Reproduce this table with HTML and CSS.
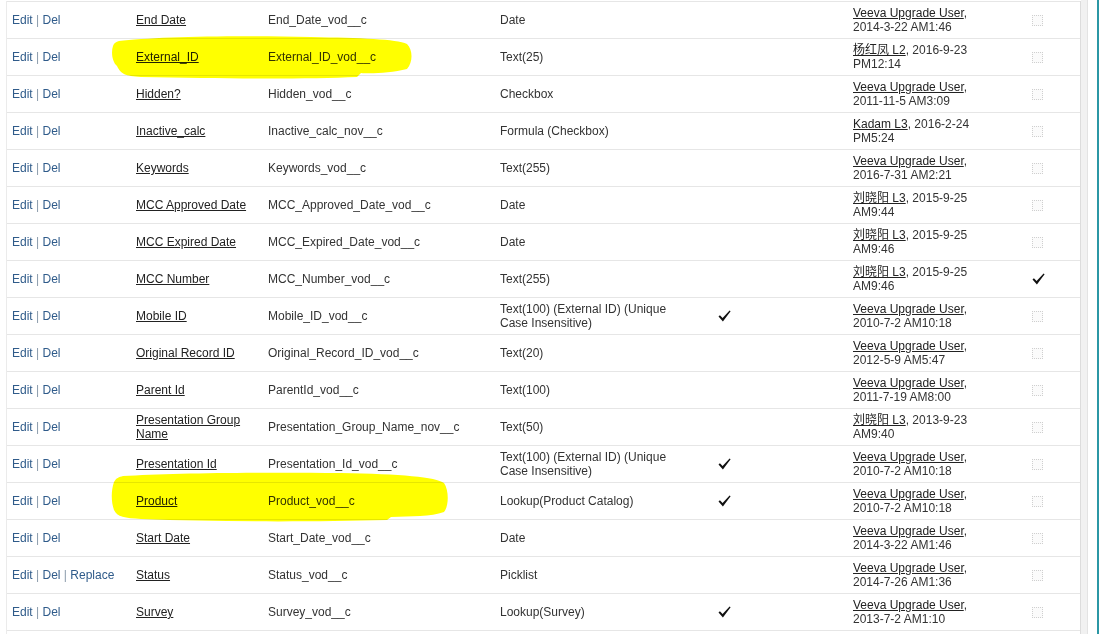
FILE: index.html
```html
<!DOCTYPE html>
<html>
<head>
<meta charset="utf-8">
<link rel="stylesheet" href="styles.css">
</head>
<body>
<div class="main">
  <div class="table">
    <div class="row"><div class="act"><a>Edit</a> <span class="sep">|</span> <a>Del</a></div><div class="lbl"><a>End Date</a></div><div class="api">End_Date_vod__c</div><div class="type">Date</div><div class="idx"></div><div class="mod"><span class="mt"><a>Veeva Upgrade User</a>, 2014-3-22 AM1:46</span></div><div class="ck"><span class="box"></span></div></div>
    <div class="row"><div class="act"><a>Edit</a> <span class="sep">|</span> <a>Del</a></div><div class="lbl"><a>External_ID</a></div><div class="api">External_ID_vod__c</div><div class="type">Text(25)</div><div class="idx"></div><div class="mod"><span class="mt"><a>杨红凤 L2</a>, 2016-9-23 PM12:14</span></div><div class="ck"><span class="box"></span></div></div>
    <div class="row"><div class="act"><a>Edit</a> <span class="sep">|</span> <a>Del</a></div><div class="lbl"><a>Hidden?</a></div><div class="api">Hidden_vod__c</div><div class="type">Checkbox</div><div class="idx"></div><div class="mod"><span class="mt"><a>Veeva Upgrade User</a>, 2011-11-5 AM3:09</span></div><div class="ck"><span class="box"></span></div></div>
    <div class="row"><div class="act"><a>Edit</a> <span class="sep">|</span> <a>Del</a></div><div class="lbl"><a>Inactive_calc</a></div><div class="api">Inactive_calc_nov__c</div><div class="type">Formula (Checkbox)</div><div class="idx"></div><div class="mod"><span class="mt"><a>Kadam L3</a>, 2016-2-24 PM5:24</span></div><div class="ck"><span class="box"></span></div></div>
    <div class="row"><div class="act"><a>Edit</a> <span class="sep">|</span> <a>Del</a></div><div class="lbl"><a>Keywords</a></div><div class="api">Keywords_vod__c</div><div class="type">Text(255)</div><div class="idx"></div><div class="mod"><span class="mt"><a>Veeva Upgrade User</a>, 2016-7-31 AM2:21</span></div><div class="ck"><span class="box"></span></div></div>
    <div class="row"><div class="act"><a>Edit</a> <span class="sep">|</span> <a>Del</a></div><div class="lbl"><a>MCC Approved Date</a></div><div class="api">MCC_Approved_Date_vod__c</div><div class="type">Date</div><div class="idx"></div><div class="mod"><span class="mt"><a>刘晓阳 L3</a>, 2015-9-25 AM9:44</span></div><div class="ck"><span class="box"></span></div></div>
    <div class="row"><div class="act"><a>Edit</a> <span class="sep">|</span> <a>Del</a></div><div class="lbl"><a>MCC Expired Date</a></div><div class="api">MCC_Expired_Date_vod__c</div><div class="type">Date</div><div class="idx"></div><div class="mod"><span class="mt"><a>刘晓阳 L3</a>, 2015-9-25 AM9:46</span></div><div class="ck"><span class="box"></span></div></div>
    <div class="row"><div class="act"><a>Edit</a> <span class="sep">|</span> <a>Del</a></div><div class="lbl"><a>MCC Number</a></div><div class="api">MCC_Number_vod__c</div><div class="type">Text(255)</div><div class="idx"></div><div class="mod"><span class="mt"><a>刘晓阳 L3</a>, 2015-9-25 AM9:46</span></div><div class="ck"><svg class="tick" viewBox="0 0 13 12" width="13" height="12"><path d="M0.5 6.6 L1.9 5.3 L4.6 8.1 L11.6 0.4 L12.6 1.3 L4.9 11.6 Z"/></svg></div></div>
    <div class="row"><div class="act"><a>Edit</a> <span class="sep">|</span> <a>Del</a></div><div class="lbl"><a>Mobile ID</a></div><div class="api">Mobile_ID_vod__c</div><div class="type">Text(100) (External ID) (Unique Case Insensitive)</div><div class="idx"><svg class="tick" viewBox="0 0 13 12" width="13" height="12"><path d="M0.5 6.6 L1.9 5.3 L4.6 8.1 L11.6 0.4 L12.6 1.3 L4.9 11.6 Z"/></svg></div><div class="mod"><span class="mt"><a>Veeva Upgrade User</a>, 2010-7-2 AM10:18</span></div><div class="ck"><span class="box"></span></div></div>
    <div class="row"><div class="act"><a>Edit</a> <span class="sep">|</span> <a>Del</a></div><div class="lbl"><a>Original Record ID</a></div><div class="api">Original_Record_ID_vod__c</div><div class="type">Text(20)</div><div class="idx"></div><div class="mod"><span class="mt"><a>Veeva Upgrade User</a>, 2012-5-9 AM5:47</span></div><div class="ck"><span class="box"></span></div></div>
    <div class="row"><div class="act"><a>Edit</a> <span class="sep">|</span> <a>Del</a></div><div class="lbl"><a>Parent Id</a></div><div class="api">ParentId_vod__c</div><div class="type">Text(100)</div><div class="idx"></div><div class="mod"><span class="mt"><a>Veeva Upgrade User</a>, 2011-7-19 AM8:00</span></div><div class="ck"><span class="box"></span></div></div>
    <div class="row"><div class="act"><a>Edit</a> <span class="sep">|</span> <a>Del</a></div><div class="lbl"><a>Presentation Group Name</a></div><div class="api">Presentation_Group_Name_nov__c</div><div class="type">Text(50)</div><div class="idx"></div><div class="mod"><span class="mt"><a>刘晓阳 L3</a>, 2013-9-23 AM9:40</span></div><div class="ck"><span class="box"></span></div></div>
    <div class="row"><div class="act"><a>Edit</a> <span class="sep">|</span> <a>Del</a></div><div class="lbl"><a>Presentation Id</a></div><div class="api">Presentation_Id_vod__c</div><div class="type">Text(100) (External ID) (Unique Case Insensitive)</div><div class="idx"><svg class="tick" viewBox="0 0 13 12" width="13" height="12"><path d="M0.5 6.6 L1.9 5.3 L4.6 8.1 L11.6 0.4 L12.6 1.3 L4.9 11.6 Z"/></svg></div><div class="mod"><span class="mt"><a>Veeva Upgrade User</a>, 2010-7-2 AM10:18</span></div><div class="ck"><span class="box"></span></div></div>
    <div class="row"><div class="act"><a>Edit</a> <span class="sep">|</span> <a>Del</a></div><div class="lbl"><a>Product</a></div><div class="api">Product_vod__c</div><div class="type">Lookup(Product Catalog)</div><div class="idx"><svg class="tick" viewBox="0 0 13 12" width="13" height="12"><path d="M0.5 6.6 L1.9 5.3 L4.6 8.1 L11.6 0.4 L12.6 1.3 L4.9 11.6 Z"/></svg></div><div class="mod"><span class="mt"><a>Veeva Upgrade User</a>, 2010-7-2 AM10:18</span></div><div class="ck"><span class="box"></span></div></div>
    <div class="row"><div class="act"><a>Edit</a> <span class="sep">|</span> <a>Del</a></div><div class="lbl"><a>Start Date</a></div><div class="api">Start_Date_vod__c</div><div class="type">Date</div><div class="idx"></div><div class="mod"><span class="mt"><a>Veeva Upgrade User</a>, 2014-3-22 AM1:46</span></div><div class="ck"><span class="box"></span></div></div>
    <div class="row"><div class="act"><a>Edit</a> <span class="sep">|</span> <a>Del</a> <span class="sep">|</span> <a>Replace</a></div><div class="lbl"><a>Status</a></div><div class="api">Status_vod__c</div><div class="type">Picklist</div><div class="idx"></div><div class="mod"><span class="mt"><a>Veeva Upgrade User</a>, 2014-7-26 AM1:36</span></div><div class="ck"><span class="box"></span></div></div>
    <div class="row"><div class="act"><a>Edit</a> <span class="sep">|</span> <a>Del</a></div><div class="lbl"><a>Survey</a></div><div class="api">Survey_vod__c</div><div class="type">Lookup(Survey)</div><div class="idx"><svg class="tick" viewBox="0 0 13 12" width="13" height="12"><path d="M0.5 6.6 L1.9 5.3 L4.6 8.1 L11.6 0.4 L12.6 1.3 L4.9 11.6 Z"/></svg></div><div class="mod"><span class="mt"><a>Veeva Upgrade User</a>, 2013-7-2 AM1:10</span></div><div class="ck"><span class="box"></span></div></div>
  </div>
  <svg class="hl hl-ext" viewBox="0 0 302 44" width="302" height="44"><path d="M8 5 C40 1 120 -1 200 1 C250 2 285 3 296 8 C302 14 302 26 296 33 C280 37 260 38 250 37 L246 41 C200 43 120 43 30 41 C14 40 10 38 6 30 C1 26 0 16 2 10 C3 7 5 6 8 5 Z"/></svg>
  <svg class="hl hl-prod" viewBox="0 0 338 50" width="338" height="50"><path d="M12 4 C60 1 150 0 230 1 C290 2 325 5 333 11 C338 18 338 34 333 40 C320 45 300 44 280 45 L276 48 C200 50 110 50 30 47 C14 46 6 45 3 38 C0 30 0 18 3 10 C5 6 8 5 12 4 Z"/></svg>
</div>
<div class="gutter"></div>
<div class="space"></div>
<div class="edge"></div>
</body>
</html>
```
FILE: styles.css
```css
html, body {
  margin: 0;
  padding: 0;
  background: #fff;
}
body {
  display: flex;
  height: 634px;
  overflow: hidden;
  font-family: Arial, "Liberation Sans", "Noto Sans CJK SC", sans-serif;
  font-size: 12px;
  color: #333;
}
.main {
  position: relative;
  width: 1081px;
  flex: none;
  box-sizing: border-box;
  padding-left: 6px;
  padding-top: 1px;
}
.table {
  border-left: 1px solid #ebebeb;
  border-right: 1px solid #dcdcdc;
  height: 100%;
}
.row {
  display: grid;
  grid-template-columns: 124px 132px 232px 195px 158px 179px 53px;
  height: 36px;
  border-top: 1px solid #e6e6e6;
  align-items: center;
  line-height: 14px;
}
.row:last-child {
  border-bottom: 1px solid #e6e6e6;
}
.row > div {
  padding: 0 5px;
}
.act a {
  color: #2f5b8a;
}
.act .sep {
  color: #8a9aaa;
}
.lbl a {
  color: #222;
  text-decoration: underline;
}
.api, .type {
  color: #333;
}
.idx {
  padding-left: 28px !important;
  height: 12px;
}
.mod .mt {
  display: block;
  width: 135px;
}
.mod a {
  color: #222;
  text-decoration: underline;
}
.ck {
  height: 12px;
}
.box {
  display: block;
  width: 9px;
  height: 9px;
  margin-top: 1px;
  border: 1px dotted #cfcfcf;
  background: #fbfbfb;
}
.tick {
  display: block;
  fill: #111;
}
.hl {
  position: absolute;
  fill: #ffff00;
  mix-blend-mode: multiply;
}
.hl-ext {
  left: 111px;
  top: 36px;
}
.hl-prod {
  left: 111px;
  top: 472px;
}
.gutter {
  width: 6px;
  flex: none;
  background: #f1f1f1;
  border-right: 1px solid #e3e3e3;
}
.space {
  width: 9px;
  flex: none;
}
.edge {
  width: 2px;
  flex: none;
  background: #2b97a5;
}
```
